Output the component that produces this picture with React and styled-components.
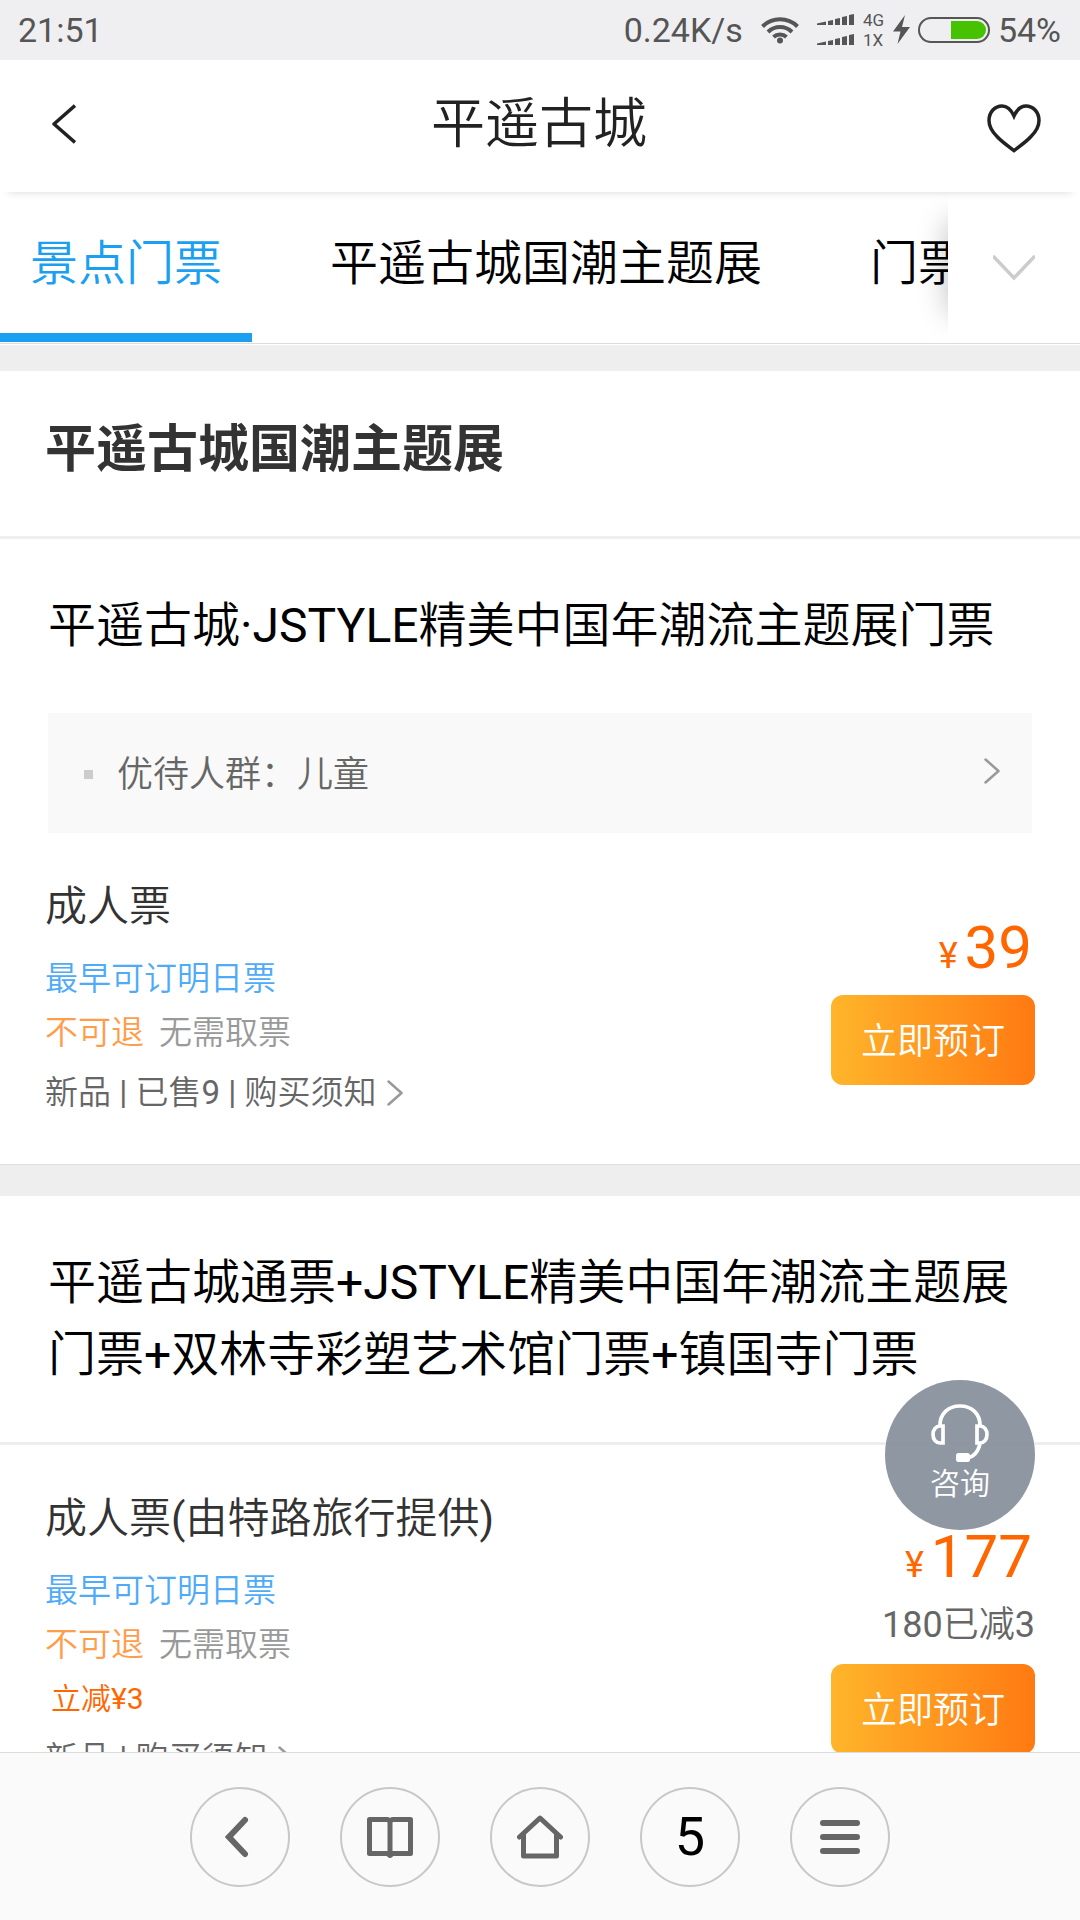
import React, { useState } from "react";
import styled, { createGlobalStyle } from "styled-components";

const GlobalStyle = createGlobalStyle`
  * {
    box-sizing: border-box;
  }
  body {
    margin: 0;
    background: #fff;
    color: #333;
    font-family: Roboto, "Noto Sans CJK SC", sans-serif;
  }
  button {
    margin: 0;
    padding: 0;
    border: 0;
    background: none;
    color: inherit;
    font: inherit;
    cursor: pointer;
  }
  a {
    color: inherit;
    text-decoration: none;
  }
  svg {
    display: block;
    flex: none;
  }
  h1, h2, h3, h4, p {
    margin: 0;
    font-weight: 350;
  }
`;

const Screen = styled.div`
  position: relative;
  display: flex;
  flex-direction: column;
  height: 100vh;
  overflow: hidden;
  font-weight: 350;
`;

// letters and digits are set a little heavier than the Chinese around them
const Latin = styled.span`
  font-weight: 400;
`;

const StatusBar = styled.div`
  display: flex;
  align-items: center;
  justify-content: space-between;
  flex: none;
  height: 60px;
  padding: 0 19px 0 18px;
  background: #efeff1;
  color: #555;
  font-size: 34px;
  font-weight: 400;
`;

const StatusIcons = styled.div`
  display: flex;
  align-items: center;
  gap: 18px;
`;

const Signal = styled.div`
  display: flex;
  align-items: center;
  gap: 9px;
`;

const Network = styled.div`
  display: flex;
  flex-direction: column;
  width: 22px;
  font-size: 17px;
  line-height: 20px;
`;

const Power = styled.div`
  display: flex;
  align-items: center;
  gap: 8px;
  margin-left: -10px;
`;

const Header = styled.header`
  position: relative;
  z-index: 1;
  display: flex;
  align-items: center;
  justify-content: space-between;
  flex: none;
  height: 132px;
  padding: 0 38px 0 36px;
  background: #fff;
  color: #222;
  box-shadow: 0 8px 8px -8px rgba(0, 0, 0, 0.16);
`;

const HeaderTitle = styled.h1`
  padding-bottom: 2px;
  font-size: 54px;
  line-height: 78px;
`;

const IconButton = styled.button`
  display: flex;
  align-items: center;
  justify-content: center;
  width: 56px;
  height: 72px;
`;

const TabBar = styled.nav`
  display: flex;
  flex: none;
  height: 152px;
  border-bottom: 1px solid #ddd;
`;

const TabList = styled.div`
  display: flex;
  flex: 1;
  gap: 48px;
  min-width: 0;
  padding-bottom: 1px;
  overflow: hidden;
`;

const Tab = styled.button`
  flex: none;
  padding: 0 30px 8px;
  border-bottom: 9px solid ${(props) => (props.$active ? "#1b9ff1" : "transparent")};
  color: ${(props) => (props.$active ? "#1b9ff1" : "#000")};
  font-size: 48px;
  white-space: nowrap;
`;

const TabMore = styled.button`
  position: relative;
  width: 132px;

  &::before {
    content: "";
    position: absolute;
    z-index: -1;
    top: 28px;
    bottom: 30px;
    left: 0;
    width: 60px;
    box-shadow: 0 0 30px rgba(0, 0, 0, 0.26);
  }
`;

// white face over the shadow, so it only falls on the tabs
const TabMoreFace = styled.span`
  display: flex;
  align-items: center;
  justify-content: center;
  height: 100%;
  background: #fff;
`;

const Content = styled.main`
  flex: 1;
  min-height: 0;
  overflow: hidden;
`;

const Divider = styled.div`
  height: ${(props) => (props.$line ? "32px" : "27px")};
  border-top: 1px solid ${(props) => (props.$line ? "#ddd" : "#fff")};
  background: #eee;
`;

const SectionTitle = styled.h2`
  padding: 43px 45px 50px;
  border-bottom: 3px solid #eee;
  font-size: 51px;
  font-weight: bold;
  line-height: 72px;
`;

const ProductTitle = styled.h3`
  padding: 51px 48px;
  border-bottom: ${(props) => (props.$line ? "3px solid #eee" : "0")};
  color: #000;
  font-size: 48px;
  line-height: 72px;
`;

const Notice = styled.a`
  display: flex;
  align-items: center;
  height: 120px;
  margin: 0 48px;
  padding: 0 32px 4px 36px;
  background: #f9f9f9;
  color: #666;
  font-size: 36px;
`;

const Bullet = styled.i`
  width: 9px;
  height: 9px;
  margin: 6px 24px 0 0;
  background: #ccc;
`;

const NoticeArrow = styled.span`
  margin-left: auto;
`;

const TicketRow = styled.article`
  display: flex;
  align-items: center;
  justify-content: space-between;
  padding: 47px 45px 44px;
`;

const TicketInfo = styled.div`
  font-size: 33px;
  line-height: 54px;
`;

const TicketName = styled.h4`
  margin-bottom: 18px;
  font-size: 42px;
`;

const Earliest = styled.p`
  color: #4fabf8;
`;

const Tags = styled.p`
  display: flex;
  gap: 15px;
  color: #999;
`;

const Refund = styled.span`
  color: #ff9d4b;
`;

const Discount = styled.p`
  padding-left: 6px;
  color: #ff6600;
  font-size: 30px;
`;

const Details = styled.a`
  display: flex;
  align-items: center;
  gap: 11px;
  margin-top: 6px;
  color: #666;
`;

const Booking = styled.div`
  display: flex;
  flex-direction: column;
  align-items: flex-end;
`;

const Price = styled.p`
  display: flex;
  align-items: baseline;
  gap: 7px;
  margin-bottom: 6px;
  padding-right: 3px;
  color: #ff6600;
  font-size: 60px;
  font-weight: 400;
  line-height: 66px;
`;

const Currency = styled.span`
  font-size: 36px;
`;

const PriceNote = styled.p`
  margin-bottom: 18px;
  color: #666;
  font-size: 36px;
  line-height: 42px;
`;

const BookButton = styled.button`
  height: 90px;
  padding: 0 30px 4px;
  border-radius: 12px;
  background: linear-gradient(90deg, #ffb52b, #ff7a12);
  color: #fff;
  font-size: 36px;
`;

const ChatButton = styled.button`
  position: absolute;
  right: 45px;
  bottom: 390px;
  display: flex;
  flex-direction: column;
  align-items: center;
  width: 150px;
  height: 150px;
  padding-top: 24px;
  border-radius: 50%;
  background: rgba(134, 142, 155, 0.92);
  color: #fff;
  font-size: 30px;
  line-height: 44px;
`;

const BottomBar = styled.nav`
  display: flex;
  align-items: center;
  justify-content: center;
  gap: 50px;
  flex: none;
  height: 168px;
  border-top: 1px solid #ddd;
  background: #fafafa;
`;

const RoundButton = styled.button`
  display: flex;
  align-items: center;
  justify-content: center;
  width: 100px;
  height: 100px;
  border: 2px solid #c8c8c8;
  border-radius: 50%;
  color: #000;
  font-size: 54px;
  font-weight: 400;
  line-height: 60px;
`;

const WifiIcon = () => (
  <svg width="38" height="28" viewBox="0 0 38 28" fill="none" stroke="#555" strokeWidth="4">
    <path d="M1.5 10.5a25 25 0 0 1 35 0" />
    <path d="M7 16a17 17 0 0 1 24 0" />
    <path d="M12.5 21a9.5 9.5 0 0 1 13 0" />
    <circle cx="19" cy="24.5" r="3" fill="#555" stroke="none" />
  </svg>
);

const bars = "M0 9.5l9-2V11H0zM11 7l5-1v5h-5zM18 5l5-1v7h-5zM25 3l5-1v9h-5zM32 1l5-1v11h-5z";

const SignalIcon = () => (
  <svg width="37" height="32" viewBox="0 0 37 32" fill="#555">
    <path d={bars} />
    <path d={bars} transform="translate(0 20)" />
  </svg>
);

const BoltIcon = () => (
  <svg width="17" height="30" viewBox="0 0 17 30" fill="#555">
    <path d="M12 0L0 16.5h7.5L4.5 29 17 12H9z" />
  </svg>
);

const BatteryIcon = () => (
  <svg width="72" height="26" viewBox="0 0 72 26">
    <rect x="1" y="1" width="70" height="24" rx="12" fill="none" stroke="#555" strokeWidth="2" />
    <path d="M33 4h26a9 9 0 0 1 0 18H33z" fill="#46c200" />
  </svg>
);

const HeartIcon = () => (
  <svg width="54" height="54" viewBox="0 0 54 54" fill="none" stroke="#222" strokeWidth="3.5">
    <path d="M27 17C24 10.5 20 7 15 7 8 7 2 13 2 21.5c0 5.5 3 11 8 16C15 43 21 47 27 51.5c6-4.5 12-8.5 17-14 5-5 8-10.5 8-16C52 13 46 7 39 7c-5 0-9 3.5-12 10z" />
  </svg>
);

const Arrow = () => (
  <svg width="16" height="26" viewBox="0 0 16 26" fill="none" stroke="#999" strokeWidth="2.5" strokeLinecap="round" strokeLinejoin="round">
    <path d="M1.5 1.5L14.5 13 1.5 24.5" />
  </svg>
);

const HeadsetIcon = () => (
  <svg width="58" height="58" viewBox="0 0 58 58" fill="none" stroke="#fff" strokeWidth="3.7">
    <path d="M9 21C9 10 17 2 29 2s20 8 20 19" />
    <path d="M12 22H9c-4 0-7 3.5-7 8.5S5 39 9 39h3z" />
    <path d="M46 22h3c4 0 7 3.5 7 8.5S53 39 49 39h-3z" />
    <path d="M49 40c-2 7-6 13-12 13.5" />
    <rect x="25" y="49" width="14" height="9" rx="2.5" fill="#fff" stroke="none" />
  </svg>
);

const tabs = ["景点门票", "平遥古城国潮主题展", "门票"];

const Mixed = ({ children }) => (
  <span>
    {children.split(/([ -~·¥]+)/).map((part, i) => (i % 2 ? <Latin key={i}>{part}</Latin> : part))}
  </span>
);

const Ticket = ({ name, discount, details, price, note }) => (
  <TicketRow>
    <TicketInfo>
      <TicketName>
        <Mixed>{name}</Mixed>
      </TicketName>
      <Earliest>最早可订明日票</Earliest>
      <Tags>
        <Refund>不可退</Refund>
        <span>无需取票</span>
      </Tags>
      {discount && (
        <Discount>
          <Mixed>{discount}</Mixed>
        </Discount>
      )}
      <Details href="#details">
        <Mixed>{details}</Mixed>
        <Arrow />
      </Details>
    </TicketInfo>
    <Booking>
      <Price>
        <Currency>¥</Currency>
        {price}
      </Price>
      {note && (
        <PriceNote>
          <Mixed>{note}</Mixed>
        </PriceNote>
      )}
      <BookButton type="button">立即预订</BookButton>
    </Booking>
  </TicketRow>
);

const App = () => {
  const [active, setActive] = useState(0);

  return (
    <Screen>
      <GlobalStyle />
      <StatusBar>
        <span>21:51</span>
        <StatusIcons>
          <span>0.24K/s</span>
          <WifiIcon />
          <Signal>
            <SignalIcon />
            <Network>
              <span>4G</span>
              <span>1X</span>
            </Network>
          </Signal>
          <Power>
            <BoltIcon />
            <BatteryIcon />
            <span>54%</span>
          </Power>
        </StatusIcons>
      </StatusBar>

      <Header>
        <IconButton type="button" aria-label="返回">
          <svg width="24" height="44" viewBox="0 0 24 44" fill="none" stroke="#222" strokeWidth="3.5" strokeLinejoin="round">
            <path d="M23 1.5L2 20l21 18.5" />
          </svg>
        </IconButton>
        <HeaderTitle>平遥古城</HeaderTitle>
        <IconButton type="button" aria-label="收藏">
          <HeartIcon />
        </IconButton>
      </Header>

      <TabBar>
        <TabList>
          {tabs.map((tab, i) => (
            <Tab key={tab} type="button" $active={i === active} onClick={() => setActive(i)}>
              {tab}
            </Tab>
          ))}
        </TabList>
        <TabMore type="button" aria-label="更多">
          <TabMoreFace>
            <svg width="42" height="27" viewBox="0 0 42 27" fill="none" stroke="#ccc" strokeWidth="3.5">
              <path d="M0 2l21 22L42 2" />
            </svg>
          </TabMoreFace>
        </TabMore>
      </TabBar>

      <Content>
        <Divider />
        <SectionTitle>平遥古城国潮主题展</SectionTitle>
        <ProductTitle>
          <Mixed>平遥古城·JSTYLE精美中国年潮流主题展门票</Mixed>
        </ProductTitle>
        <Notice href="#notice">
          <Bullet />
          优待人群：儿童
          <NoticeArrow>
            <Arrow />
          </NoticeArrow>
        </Notice>
        <Ticket name="成人票" details="新品 | 已售9 | 购买须知" price="39" />

        <Divider $line />
        <ProductTitle $line>
          <Mixed>平遥古城通票+JSTYLE精美中国年潮流主题展门票+双林寺彩塑艺术馆门票+镇国寺门票</Mixed>
        </ProductTitle>
        <Ticket
          name="成人票(由特路旅行提供)"
          discount="立减¥3"
          details="新品 | 购买须知"
          price="177"
          note="180已减3"
        />
      </Content>

      <ChatButton type="button">
        <HeadsetIcon />
        咨询
      </ChatButton>

      <BottomBar>
        <RoundButton type="button" aria-label="后退">
          <svg width="30" height="42" viewBox="0 0 30 42" fill="none" stroke="#666" strokeWidth="6" strokeLinecap="round">
            <path d="M20 4L4 21l16 17" />
          </svg>
        </RoundButton>
        <RoundButton type="button" aria-label="书签">
          <svg width="46" height="42" viewBox="0 0 46 42" fill="none" stroke="#666" strokeWidth="5" strokeLinejoin="round">
            <path d="M2.5 3.5h18l2.5 1.5 2.5-1.5h18v34h-18L23 39.5l-2.5-2h-18zM23 5v33" />
          </svg>
        </RoundButton>
        <RoundButton type="button" aria-label="主页">
          <svg width="46" height="44" viewBox="0 0 46 44" fill="none" stroke="#666" strokeWidth="5" strokeLinecap="round" strokeLinejoin="round">
            <path d="M2.5 22L23 3l20.5 19M6.5 20v21h33V20" />
          </svg>
        </RoundButton>
        <RoundButton type="button">5</RoundButton>
        <RoundButton type="button" aria-label="菜单">
          <svg width="40" height="34" viewBox="0 0 40 34" fill="#666">
            <rect width="40" height="6" rx="3" />
            <rect y="14" width="40" height="6" rx="3" />
            <rect y="28" width="40" height="6" rx="3" />
          </svg>
        </RoundButton>
      </BottomBar>
    </Screen>
  );
};

export default App;
